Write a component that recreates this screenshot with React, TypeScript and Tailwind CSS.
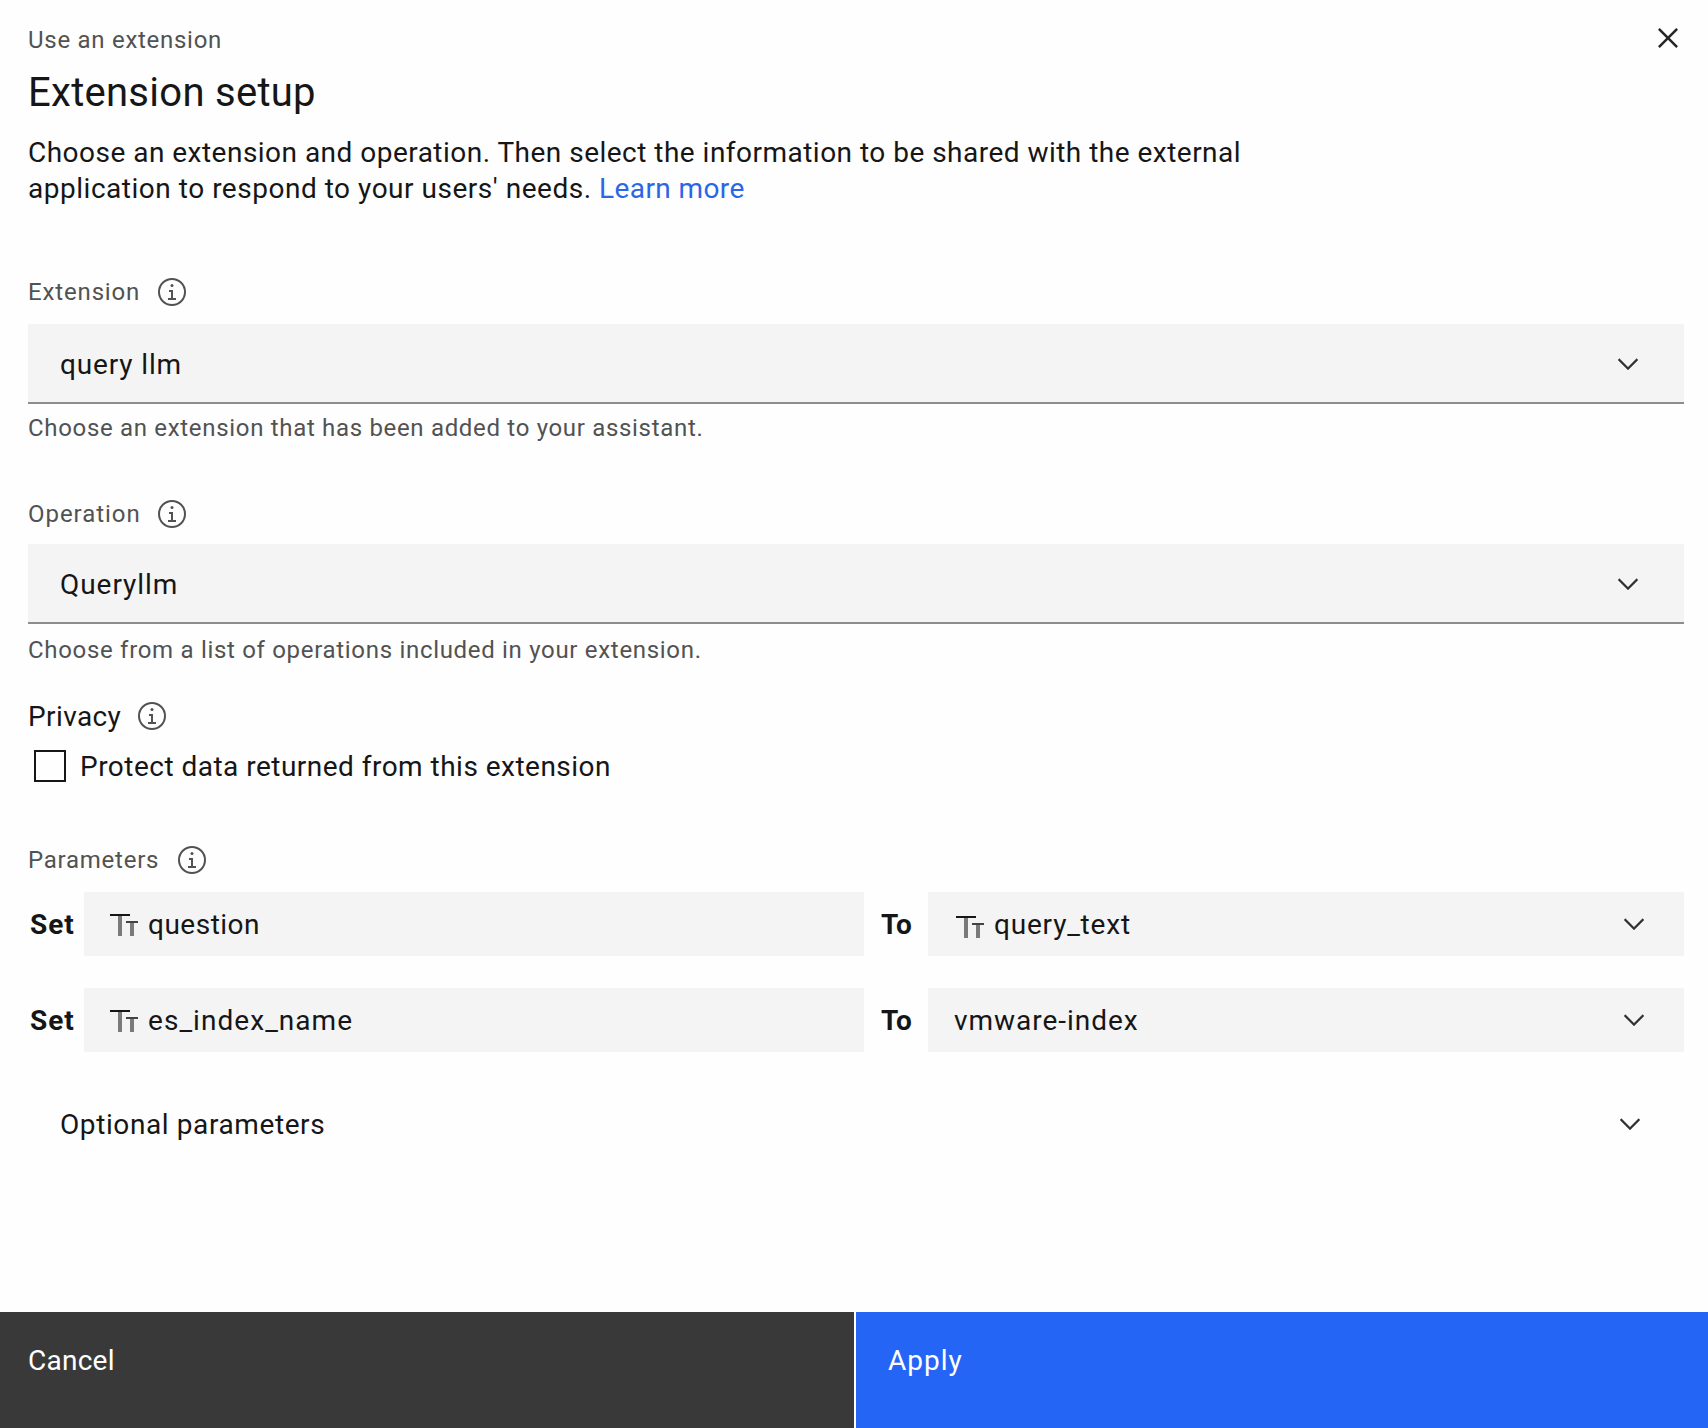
import type { ReactNode } from 'react';

function InfoIcon({ className = '' }: { className?: string }) {
  return (
    <svg viewBox="0 0 32 32" className={`size-8 shrink-0 fill-[#525252] ${className}`}>
      <polygon points="17 22 17 14 13 14 13 16 15 16 15 22 12 22 12 24 20 24 20 22 17 22" />
      <path d="M16,8a1.5,1.5,0,1,0,1.5,1.5A1.5,1.5,0,0,0,16,8Z" />
      <path d="M16,30A14,14,0,1,1,30,16,14,14,0,0,1,16,30ZM16,4A12,12,0,1,0,28,16,12,12,0,0,0,16,4Z" />
    </svg>
  );
}

function ChevronIcon({ className = '' }: { className?: string }) {
  return (
    <svg
      viewBox="0 0 16 16"
      className={`size-8 shrink-0 fill-[#303030] stroke-[#303030] [stroke-width:0.15] ${className}`}
    >
      <polygon points="8 11 3 6 3.7 5.3 8 9.6 12.3 5.3 13 6" />
    </svg>
  );
}

function CloseIcon() {
  return (
    <svg viewBox="0 0 32 32" className="size-10 fill-[#262626]">
      <polygon points="17.4141 16 24 9.4141 22.5859 8 16 14.5859 9.4143 8 8 9.4141 14.5859 16 8 22.5859 9.4143 24 16 17.4141 22.5859 24 24 22.5859" />
    </svg>
  );
}

function StringTypeIcon({ className = '' }: { className?: string }) {
  return (
    <svg viewBox="0 0 32 32" className={`size-8 shrink-0 fill-[#161616] ${className}`}>
      <rect x="2" y="6" width="20" height="2" />
      <rect x="10" y="8" width="4" height="20" opacity="0.55" />
      <rect x="18" y="13" width="12" height="2" opacity="0.8" />
      <rect x="22" y="15" width="4" height="13" opacity="0.55" />
    </svg>
  );
}

function Label({ children, className }: { children: ReactNode; className: string }) {
  return (
    <div className={`flex h-8 items-center text-[24px] leading-8 text-[#525252] ${className}`}>{children}</div>
  );
}

function Select({ children, className }: { children: ReactNode; className: string }) {
  return (
    <button
      className={`flex h-20 w-full items-center justify-between border-b-2 border-[#8d8d8d] bg-[#f4f4f4] pt-0.5 pr-10 pl-8 text-left ${className}`}
    >
      {children}
      <ChevronIcon />
    </button>
  );
}

export default function App() {
  return (
    <div className="flex h-[1428px] w-[1708px] flex-col bg-[#fefefe] font-['Roboto',sans-serif] text-[28px] leading-9 text-[#161616]">
      <main className="flex-1 pr-6 pl-7">
        <header className="flex justify-between">
          <div className="pt-6">
            <p className="text-[24px] leading-8 tracking-[0.72px] text-[#525252]">Use an extension</p>
            <h1 className="mt-[13px] text-[40px] leading-12 tracking-[0.28px]">Extension setup</h1>
            <p className="mt-[18px] whitespace-nowrap">
              <span className="tracking-[0.48px]">
                Choose an extension and operation. Then select the information to be shared with the external
              </span>
              <br />
              <span className="tracking-[0.52px]">application to respond to your users' needs. </span>
              <a className="tracking-[0.4px] text-[#2b66e6]">Learn more</a>
            </p>
          </div>
          <button className="mt-[18px] -mr-1 size-10">
            <CloseIcon />
          </button>
        </header>

        <Label className="mt-[69px]">
          <span className="tracking-[0.85px]">Extension</span>
          <InfoIcon className="ml-4" />
        </Label>
        <Select className="mt-4">
          <span className="pt-0.5 tracking-[0.85px]">query llm</span>
        </Select>
        <Label className="mt-2">
          <span className="tracking-[0.68px]">Choose an extension that has been added to your assistant.</span>
        </Label>

        <Label className="mt-[54px]">
          <span className="tracking-[0.95px]">Operation</span>
          <InfoIcon className="ml-[15px]" />
        </Label>
        <Select className="mt-3.5">
          <span className="pt-0.5 tracking-[0.95px]">Queryllm</span>
        </Select>
        <Label className="mt-2.5">
          <span className="tracking-[0.69px]">Choose from a list of operations included in your extension.</span>
        </Label>

        <div className="mt-8 flex h-9 items-center">
          <span className="pt-0.5 tracking-[0.4px]">Privacy</span>
          <InfoIcon className="ml-[15px]" />
        </div>
        <label className="mt-3.5 flex h-9 items-center pl-1.5">
          <span className="size-8 border-2 border-[#161616]" />
          <span className="ml-3.5 pt-0.5 tracking-[0.48px]">Protect data returned from this extension</span>
        </label>

        <Label className="mt-[60px]">
          <span className="tracking-[0.75px]">Parameters</span>
          <InfoIcon className="ml-[17px]" />
        </Label>
        <div className="mt-4 grid grid-cols-[56px_780px_64px_756px] gap-y-8">
          <div className="flex items-center pt-0.5 pl-0.5 font-bold tracking-[0.9px]">Set</div>
          <div className="flex h-16 items-center bg-[#f4f4f4] pl-6">
            <StringTypeIcon />
            <span className="ml-2 pt-0.5 tracking-[0.5px]">question</span>
          </div>
          <div className="flex items-center pt-0.5 pl-[17px] font-bold tracking-[0.1px]">To</div>
          <div className="flex h-16 items-center bg-[#f4f4f4] pr-[34px] pl-[26px]">
            <StringTypeIcon className="mt-1" />
            <span className="ml-2 flex-1 pt-0.5 tracking-[0.8px]">query_text</span>
            <ChevronIcon />
          </div>

          <div className="flex items-center pt-0.5 pl-0.5 font-bold tracking-[0.9px]">Set</div>
          <div className="flex h-16 items-center bg-[#f4f4f4] pl-6">
            <StringTypeIcon />
            <span className="ml-2 pt-0.5 tracking-[1.05px]">es_index_name</span>
          </div>
          <div className="flex items-center pt-0.5 pl-[17px] font-bold tracking-[0.1px]">To</div>
          <div className="flex h-16 items-center bg-[#f4f4f4] pr-[34px] pl-[26px]">
            <span className="flex-1 pt-0.5 tracking-[0.97px]">vmware-index</span>
            <ChevronIcon />
          </div>
        </div>

        <button className="mt-[54px] flex h-9 w-full items-center justify-between pr-[38px] pl-8 text-left">
          <span className="pt-0.5 tracking-[0.6px]">Optional parameters</span>
          <ChevronIcon />
        </button>
      </main>

      <footer className="grid h-[116px] grid-cols-[854px_852px] gap-x-0.5 text-white">
        <button className="flex items-start bg-[#393939] pt-[31px] pl-7 tracking-[0.25px]">Cancel</button>
        <button className="flex items-start bg-[#2465f6] pt-[31px] pl-8 tracking-[1px]">Apply</button>
      </footer>
    </div>
  );
}
